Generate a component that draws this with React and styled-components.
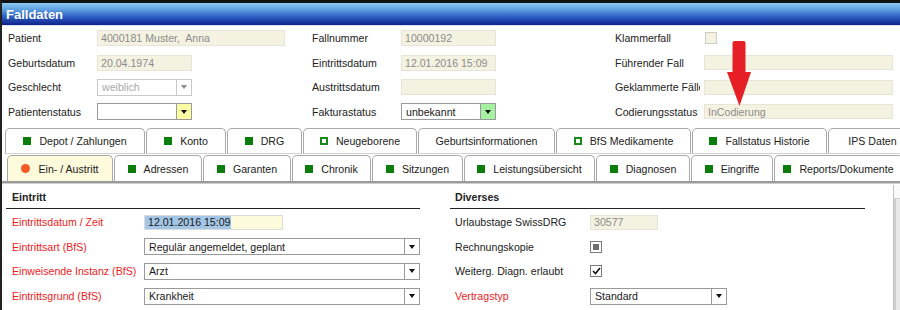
import React from 'react';
import styled, { createGlobalStyle } from 'styled-components';

const GlobalStyle = createGlobalStyle`
  html, body { margin: 0; padding: 0; background: #fff; }
  body {
    font-family: "Liberation Sans", Arial, sans-serif;
    font-size: 10.6px;
    color: #222;
  }
`;

const Frame = styled.div`
  position: relative;
  width: 900px;
  height: 310px;
  overflow: hidden;
  box-sizing: border-box;
  border-top: 3px solid #111;
  border-left: 2px solid #222;
  background: #fff;
  display: flex;
  flex-direction: column;
`;

const TitleBar = styled.div`
  flex: none;
  height: 22px;
  display: flex;
  align-items: center;
  padding-left: 4px;
  color: #fff;
  font-size: 13px;
  font-weight: bold;
  background: linear-gradient(to bottom, #8ccaf2 0%, #5d9fe0 30%, #2d5fc2 62%, #0f228c 100%);
  border-bottom: 1px solid #dfe3ea;
`;

const Header = styled.div`
  flex: none;
  display: grid;
  grid-template-columns: 304px 303px 1fr;
  padding-left: 6px;
`;

const Column = styled.div`
  display: flex;
  flex-direction: column;
`;

const Row = styled.div`
  height: ${p => p.$h || 24.5}px;
  display: grid;
  grid-template-columns: ${p => p.$label}px auto;
  align-items: center;
  padding-left: ${p => p.$pad || 0}px;
`;

const Label = styled.div`
  white-space: nowrap;
  overflow: hidden;
  color: ${p => (p.$required ? '#ee1c24' : '#222')};
`;

const ReadOnly = styled.div`
  box-sizing: border-box;
  width: ${p => p.$w}px;
  height: ${p => p.$h || 16}px;
  padding-left: 3px;
  display: flex;
  align-items: center;
  background: #f4f2e1;
  border: 1px solid #e7e5d8;
  color: #8c8c8c;
  white-space: pre;
`;

const DateInput = styled.div`
  box-sizing: border-box;
  width: ${p => p.$w}px;
  height: 15px;
  display: flex;
  align-items: center;
  background: #fdfbdc;
  border: 1px solid #dcdcdc;
`;

const Selected = styled.span`
  background: #a4c6e6;
  color: #1a1a1a;
  padding: 0 1px 0 3px;
  line-height: 13px;
`;

const Select = styled.div`
  box-sizing: border-box;
  width: ${p => p.$w}px;
  height: 17px;
  display: flex;
  background: #fff;
  border: 1px solid ${p => (p.$disabled ? '#cacaca' : '#9a9a9a')};
  color: ${p => (p.$disabled ? '#a8a8a8' : '#1a1a1a')};
`;

const SelectValue = styled.div`
  flex: 1;
  display: flex;
  align-items: center;
  padding-left: 4px;
  white-space: nowrap;
  overflow: hidden;
`;

const ArrowBtn = styled.div`
  width: 14px;
  display: flex;
  align-items: center;
  justify-content: center;
  background: ${p => p.$bg || '#fff'};
  border-left: 1px solid ${p => (p.$disabled ? '#cacaca' : '#9a9a9a')};
  &::after {
    content: '';
    border-left: 3px solid transparent;
    border-right: 3px solid transparent;
    border-top: 4px solid ${p => (p.$disabled ? '#8a8a8a' : '#111')};
  }
`;

const Check = styled.div`
  box-sizing: border-box;
  width: 12px;
  height: 12px;
  display: flex;
  align-items: center;
  justify-content: center;
  background: ${p => (p.$readonly ? '#f4f2e1' : '#fff')};
  border: 1px solid ${p => (p.$readonly ? '#cfcdc2' : '#7a7a7a')};
`;

const CheckFill = styled.div`
  width: 6px;
  height: 6px;
  background: #6e6e6e;
`;

const Tabs = styled.div`
  flex: none;
  display: flex;
  flex-direction: column;
  gap: 1px;
  margin-top: 4px;
`;

const TabRow = styled.div`
  display: flex;
  padding-left: ${p => p.$offset}px;
  white-space: nowrap;
`;

const Tab = styled.div`
  flex: none;
  box-sizing: border-box;
  width: ${p => p.$w - 1}px;
  margin-right: 1px;
  height: 26px;
  display: flex;
  align-items: center;
  justify-content: center;
  gap: 8px;
  border: 1px solid #a9a9a9;
  border-bottom: ${p => (p.$top ? '1px solid #d2d2d2' : 'none')};
  border-radius: 5px 5px 0 0;
  background: ${p => (p.$active ? '#fdfbdc' : '#fff')};
  color: #222;
`;

const Square = styled.span`
  box-sizing: border-box;
  width: 8px;
  height: 8px;
  background: ${p => (p.$hollow ? '#fff' : '#0b7d0b')};
  border: ${p => (p.$hollow ? '2px solid #1a8a1a' : 'none')};
`;

const Dot = styled.span`
  width: 9px;
  height: 9px;
  border-radius: 50%;
  background: #f15a24;
`;

const Panel = styled.div`
  flex: 1;
  display: flex;
  border-top: 2px solid #9b9b9b;
  box-shadow: inset 0 1px 0 #cfcfcf;
  padding-left: 4px;
`;

const Sections = styled.div`
  display: grid;
  grid-template-columns: 414px 415px;
  column-gap: 30px;
  align-items: start;
  padding-top: 2px;
`;

const Section = styled.div`
  display: flex;
  flex-direction: column;
`;

const SectionTitle = styled.div`
  height: 22px;
  display: flex;
  align-items: center;
  padding-left: ${p => p.$pad}px;
  padding-top: 1px;
  font-weight: bold;
  border-bottom: 1px solid #222;
  margin-bottom: 1px;
`;

const Scroll = styled.div`
  margin-left: auto;
  margin-top: 2px;
  width: 6px;
  display: flex;
  flex-direction: column;
  border-left: 1px solid #c4c4c4;
  background: #e9e9e9;
`;

const ScrollUp = styled.div`
  height: 13px;
  background: #fafafa;
  border-bottom: 1px solid #d0d0d0;
`;

const ScrollTrack = styled.div`
  flex: 1;
  border-left: 2px solid #cfcfcf;
`;

const Arrow = styled.svg`
  position: absolute;
  left: 722px;
  top: 37px;
`;

const Tick = () => (
  <svg width="9" height="8" viewBox="0 0 9 8">
    <path d="M1 4 L3.5 6.5 L8 1" fill="none" stroke="#111" strokeWidth="1.6" />
  </svg>
);

const DropDown = ({ w, value, bg, disabled }) => (
  <Select $w={w} $disabled={disabled}>
    <SelectValue>{value}</SelectValue>
    <ArrowBtn $bg={bg} $disabled={disabled} />
  </Select>
);

const TabIcon = ({ kind }) => {
  if (kind === 'dot') return <Dot />;
  if (kind === 'hollow') return <Square $hollow />;
  if (kind === 'none') return null;
  return <Square />;
};

const topTabs = [
  ['Depot / Zahlungen', 141],
  ['Konto', 81],
  ['DRG', 76],
  ['Neugeborene', 115, 'hollow'],
  ['Geburtsinformationen', 138, 'none'],
  ['BfS Medikamente', 136, 'hollow'],
  ['Fallstatus Historie', 136],
  ['IPS Daten', 90, 'none'],
];

const bottomTabs = [
  ['Ein- / Austritt', 107, 'dot'],
  ['Adressen', 89],
  ['Garanten', 89],
  ['Chronik', 80],
  ['Sitzungen', 92],
  ['Leistungsübersicht', 132],
  ['Diagnosen', 95],
  ['Eingriffe', 83],
  ['Reports/Dokumente', 130],
];

export default function App() {
  return (
    <>
      <GlobalStyle />
      <Frame>
        <TitleBar>Falldaten</TitleBar>

        <Header>
          <Column>
            <Row $label={89}>
              <Label>Patient</Label>
              <ReadOnly $w={188}>4000181 Muster,  Anna</ReadOnly>
            </Row>
            <Row $label={89}>
              <Label>Geburtsdatum</Label>
              <ReadOnly $w={95}>20.04.1974</ReadOnly>
            </Row>
            <Row $label={89}>
              <Label>Geschlecht</Label>
              <DropDown w={95} value="weiblich" disabled />
            </Row>
            <Row $label={89}>
              <Label>Patientenstatus</Label>
              <DropDown w={95} value="" bg="#ffffa6" />
            </Row>
          </Column>
          <Column>
            <Row $label={89}>
              <Label>Fallnummer</Label>
              <ReadOnly $w={95}>10000192</ReadOnly>
            </Row>
            <Row $label={89}>
              <Label>Eintrittsdatum</Label>
              <ReadOnly $w={95}>12.01.2016 15:09</ReadOnly>
            </Row>
            <Row $label={89}>
              <Label>Austrittsdatum</Label>
              <ReadOnly $w={95} />
            </Row>
            <Row $label={89}>
              <Label>Fakturastatus</Label>
              <DropDown w={95} value="unbekannt" bg="#a6f0a0" />
            </Row>
          </Column>
          <Column>
            <Row $label={90}>
              <Label>Klammerfall</Label>
              <Check $readonly />
            </Row>
            <Row $label={89}>
              <Label>Führender Fall</Label>
              <ReadOnly $w={189} $h={15} />
            </Row>
            <Row $label={89}>
              <Label style={{ width: 85 }}>Geklammerte Fälle</Label>
              <ReadOnly $w={189} $h={15} />
            </Row>
            <Row $label={89}>
              <Label>Codierungsstatus</Label>
              <ReadOnly $w={189} $h={15}>InCodierung</ReadOnly>
            </Row>
          </Column>
        </Header>

        <Tabs>
          <TabRow $offset={3}>
            {topTabs.map(([name, w, icon]) => (
              <Tab key={name} $w={w} $top>
                <TabIcon kind={icon} />
                {name}
              </Tab>
            ))}
          </TabRow>
          <TabRow $offset={5}>
            {bottomTabs.map(([name, w, icon]) => (
              <Tab key={name} $w={w} $active={icon === 'dot'}>
                <TabIcon kind={icon} />
                {name}
              </Tab>
            ))}
          </TabRow>
        </Tabs>

        <Panel>
          <Sections>
            <Section>
              <SectionTitle $pad={6}>Eintritt</SectionTitle>
              <Row $label={132} $pad={6} $h={24.6}>
                <Label $required>Eintrittsdatum / Zeit</Label>
                <DateInput $w={139}>
                  <Selected>12.01.2016 15:09</Selected>
                </DateInput>
              </Row>
              <Row $label={132} $pad={6} $h={24.6}>
                <Label $required>Eintrittsart (BfS)</Label>
                <DropDown w={276} value="Regulär angemeldet, geplant" />
              </Row>
              <Row $label={132} $pad={6} $h={24.6}>
                <Label $required>Einweisende Instanz (BfS)</Label>
                <DropDown w={276} value="Arzt" />
              </Row>
              <Row $label={132} $pad={6} $h={24.6}>
                <Label $required>Eintrittsgrund (BfS)</Label>
                <DropDown w={276} value="Krankheit" />
              </Row>
            </Section>
            <Section>
              <SectionTitle $pad={5}>Diverses</SectionTitle>
              <Row $label={135} $pad={5} $h={24.6}>
                <Label>Urlaubstage SwissDRG</Label>
                <ReadOnly $w={68} $h={15}>30577</ReadOnly>
              </Row>
              <Row $label={135} $pad={5} $h={24.6}>
                <Label>Rechnungskopie</Label>
                <Check>
                  <CheckFill />
                </Check>
              </Row>
              <Row $label={135} $pad={5} $h={24.6}>
                <Label>Weiterg. Diagn. erlaubt</Label>
                <Check>
                  <Tick />
                </Check>
              </Row>
              <Row $label={135} $pad={5} $h={24.6}>
                <Label $required>Vertragstyp</Label>
                <DropDown w={137} value="Standard" />
              </Row>
            </Section>
          </Sections>
          <Scroll>
            <ScrollUp />
            <ScrollTrack />
          </Scroll>
        </Panel>

        <Arrow width="28" height="68" viewBox="0 0 28 68">
          <rect x="8.5" y="1" width="13" height="34" rx="2" fill="#e61e26" />
          <polygon points="3,32 27,32 15.5,66" fill="#e61e26" />
        </Arrow>
      </Frame>
    </>
  );
}
